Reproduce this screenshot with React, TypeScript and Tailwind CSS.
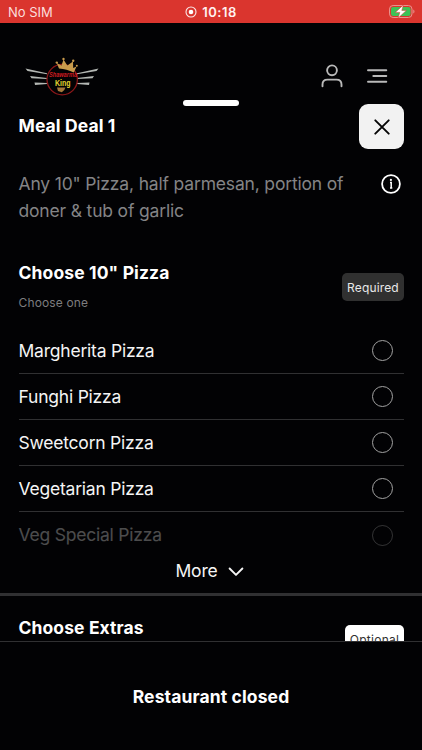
import { useState } from 'react';

const pizzas = [
  'Margherita Pizza',
  'Funghi Pizza',
  'Sweetcorn Pizza',
  'Vegetarian Pizza',
  'Veg Special Pizza',
];

function StatusBar() {
  return (
    <div className="relative flex h-[23px] shrink-0 items-center justify-between bg-[#da352e] pl-2 pr-[6px] text-[13px] leading-none text-[#fbdedc]">
      <span className="pt-px">No SIM</span>
      <div className="absolute inset-0 flex items-center justify-center gap-[5px] pt-px">
        <svg width="12" height="12" viewBox="0 0 12 12" fill="none">
          <circle cx="6" cy="6" r="5" stroke="#fbe9e8" strokeWidth="1.1" />
          <circle cx="6" cy="6" r="2.3" fill="#fff" />
        </svg>
        <span className="text-[13px] font-semibold tracking-[0.5px] text-[#fff1f0]">10:18</span>
      </div>
      <svg width="28" height="15" viewBox="0 0 28 15" fill="none">
        <rect x="1.5" y="1.5" width="22.5" height="12" rx="3.6" stroke="#e9938e" />
        <rect x="3" y="3" width="19.5" height="9" rx="2.2" fill="#3cc256" />
        <path d="M25.3 5.5c1.6.6 1.6 3.4 0 4z" fill="#e9938e" />
        <path d="M15.4.9 7.300 8.400h4.500l-1.700 5.700 8.300-7.700h-4.600z" fill="#fff" stroke="#da352e" strokeWidth=".5" />
      </svg>
    </div>
  );
}

function Logo() {
  return (
    <svg width="76" height="44" viewBox="0 0 76 44" fill="none">
      <g fill="#b4b8b4">
        <path d="M1.500 12.500 23 17.300v.9L3.500 14.900z" />
        <path d="M6 20 23 22v.9L7.500 22.300z" />
        <path d="M10.500 26.600 23 27.100v.8l-12 1z" />
        <path d="M74.500 12.500 53 17.300v.9l19.500-3.300z" />
        <path d="M70 20 53 22v.9l15.500-.6z" />
        <path d="M65.500 26.600 53 27.100v.8l12 1z" />
      </g>
      <circle cx="38.200" cy="23.600" r="15.200" stroke="#8a1719" strokeWidth="1.300" />
      <g fill="#c89b4c">
        <path d="m35 12.500-2.300-5.500 4.800 2.600 2-6.200 3.800 6.200 5.700-4.200.2 6.500 3.300-1.500-2.700 6.100c-4.800-2.300-9.500-3.500-14.800-4z" />
        <circle cx="39.500" cy="2.900" r="1.200" />
        <circle cx="49.200" cy="4.800" r="1.200" />
        <circle cx="32.800" cy="6.600" r="1.200" />
        <circle cx="52.800" cy="9.800" r="1" />
      </g>
      <path d="M33 31.500h8.500l-1.200 2.500-2.500 2.200-3.800-1.200z" fill="#a67a3c" />
      <text x="25" y="21.300" fill="#d01c20" fontSize="7" fontWeight="700" fontStyle="italic" fontFamily="Liberation Sans, sans-serif" textLength="28" lengthAdjust="spacingAndGlyphs">Shawarma</text>
      <text x="31" y="30" fill="#e4d532" fontSize="9" fontWeight="700" fontFamily="Liberation Sans, sans-serif" textLength="15.500" lengthAdjust="spacingAndGlyphs">King</text>
    </svg>
  );
}

function Header() {
  return (
    <header className="flex h-[74px] shrink-0 items-center justify-between pl-6 pr-[34px] pt-[31px]">
      <div className="mt-[5px]">
        <Logo />
      </div>
      <div className="flex items-center gap-[23px]">
        <svg width="22" height="24" viewBox="0 0 22 24" fill="none" stroke="#b9b9b9" strokeWidth="1.9" strokeLinecap="round">
          <circle cx="11" cy="6.300" r="4.900" />
          <path d="M1.500 22.300v-1.700c0-3.100 2.100-5 5-5h9c2.900 0 5 1.900 5 5v1.700" />
        </svg>
        <svg width="22" height="16" viewBox="0 0 22 16" fill="none" stroke="#b9b9b9" strokeWidth="1.900" strokeLinecap="round">
          <path d="M2 2.200h18.300M7.300 8h13M2 13.700h18.300" />
        </svg>
      </div>
    </header>
  );
}

export default function App() {
  const [selected, setSelected] = useState<string | null>(null);

  return (
    <div className="flex h-[750px] w-[422px] flex-col overflow-hidden bg-[#020204] font-['Inter',sans-serif] text-[#f5f5f5]">
      <StatusBar />
      <Header />

      <main className="relative min-h-0 flex-1 overflow-hidden pt-[7px]">
        <div className="absolute left-[183px] top-[2.500px] h-[6px] w-[56px] rounded-full bg-white" />

        <div className="flex items-start justify-between pl-[18.500px] pr-[18px]">
          <h1 className="pt-[8px] text-[17.500px] font-bold leading-7 tracking-[0.1px] text-white">Meal Deal 1</h1>
          <button className="flex h-[45px] w-[45px] items-center justify-center rounded-[9px] bg-[#f2f2f2]">
            <svg width="16" height="16" viewBox="0 0 16 16" stroke="#050505" strokeWidth="1.900" strokeLinecap="round">
              <path d="m1.300 1.300 13.400 13.400M14.700 1.300 1.300 14.700" />
            </svg>
          </button>
        </div>

        <div className="mt-[21px] flex items-start justify-between pl-[18.500px] pr-[21px]">
          <p className="text-[17.500px] leading-[27px] tracking-[-0.170px] text-[#848486]">
            Any 10" Pizza, half parmesan, portion of
            <br />
            doner &amp; tub of garlic
          </p>
          <svg className="mt-[4px] shrink-0" width="20" height="20" viewBox="0 0 20 20" fill="none">
            <circle cx="10" cy="10" r="8.900" stroke="#fff" strokeWidth="1.800" />
            <path d="M9 8.600h1.200v5.200M9 13.900h2.300" stroke="#fff" strokeWidth="1.500" />
            <circle cx="9.900" cy="5.900" r="1.100" fill="#fff" />
          </svg>
        </div>

        <section>
          <div className="mt-[34px] flex items-start justify-between pl-[18.500px] pr-[18px]">
            <div className="pt-px">
              <h2 className="text-[17.500px] font-bold leading-7 tracking-[0.120px] text-white">Choose 10" Pizza</h2>
              <p className="mt-[6px] text-[12px] leading-5 tracking-[0.150px] text-[#7d7d7f]">Choose one</p>
            </div>
            <span className="mt-[15px] flex h-7 w-[62px] items-center justify-center rounded-[5px] bg-[#303030] pt-px text-[12px] tracking-[0.150px] text-[#e8e8e8]">
              Required
            </span>
          </div>

          <ul className="mt-[15px] pl-[18.500px] pr-[18px]">
            {pizzas.map((pizza, i) => (
              <li
                key={pizza}
                onClick={() => setSelected(pizza)}
                className={`flex h-[46px] cursor-pointer items-center justify-between pr-[11.500px] text-[17.500px] tracking-[-0.220px] ${
                  i === pizzas.length - 1 ? 'opacity-30' : 'border-b border-[#303032]'
                }`}
              >
                <span className={i === pizzas.length - 1 ? '' : 'pt-[2px]'}>{pizza}</span>
                <span
                  className={`h-[21px] w-[21px] rounded-full border border-[#a2a2a2] ${
                    selected === pizza ? 'bg-white' : ''
                  }`}
                />
              </li>
            ))}
          </ul>

          <button className="flex h-[35px] w-full items-center justify-center gap-[10px] pb-[8px] pr-[3px] text-[17.500px] tracking-[-0.200px]">
            <span>More</span>
            <svg width="16" height="10" viewBox="0 0 16 10" fill="none" stroke="#f5f5f5" strokeWidth="1.900" strokeLinecap="round" strokeLinejoin="round">
              <path d="M1.600 1.500 8 7.900l6.400-6.400" />
            </svg>
          </button>
        </section>

        <div className="h-[3px] bg-[#303032]" />

        <div className="mt-[17px] flex items-start justify-between pl-[18.500px] pr-[18px]">
          <h2 className="pt-px text-[17.500px] font-bold leading-7 tracking-[0.100px] text-white">Choose Extras</h2>
          <span className="mt-[12px] flex h-7 w-[59px] items-center justify-center rounded-[5px] bg-white pt-[2px] text-[12px] tracking-[0.250px] text-[#303030]">
            Optional
          </span>
        </div>
      </main>

      <footer className="flex h-[109px] shrink-0 items-center justify-center border-t border-[#303032] pt-[2px] text-[17.500px] font-bold tracking-[0.120px] text-white">
        Restaurant closed
      </footer>
    </div>
  );
}
